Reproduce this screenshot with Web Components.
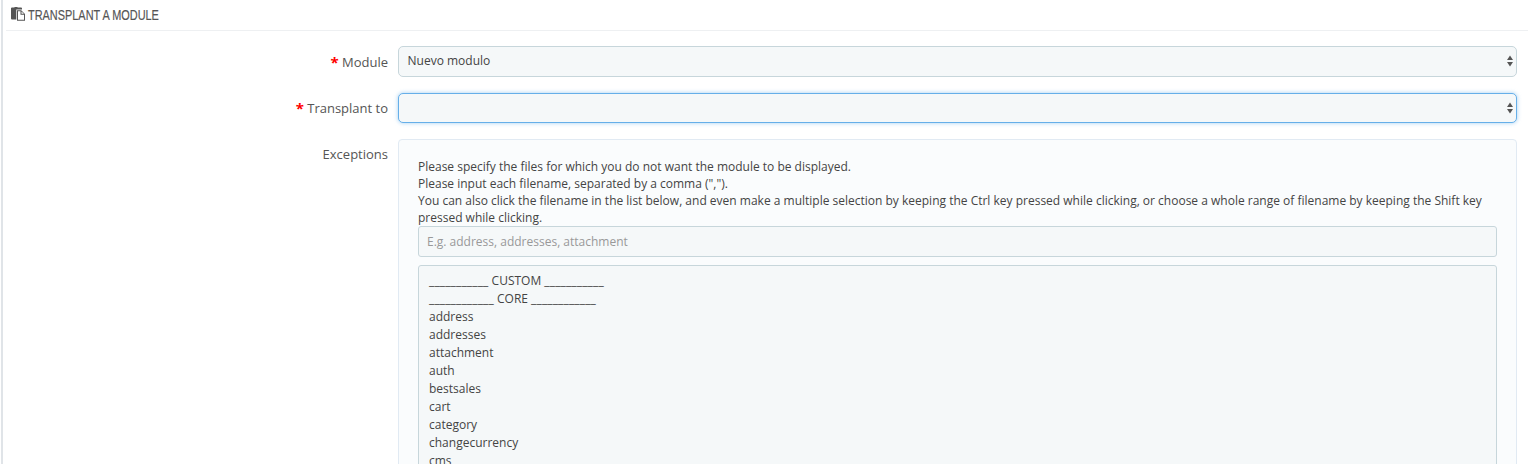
<!DOCTYPE html>
<html><head><meta charset="utf-8"><style>
html,body{margin:0;height:464px;overflow:hidden;background:#fff}
body{font:12px/17px "Open Sans",sans-serif;color:#555}
</style></head><body>
<tm-panel>
  <tm-row required label="Module"><tm-select value="Nuevo modulo"></tm-select></tm-row>
  <tm-row required label="Transplant to"><tm-select focused></tm-select></tm-row>
  <tm-row label="Exceptions" style="--label-top:6.5px">
    <tm-well>
      <p>Please specify the files for which you do not want the module to be displayed.<br>Please input each filename, separated by a comma (",").<br>You can also click the filename in the list below, and even make a multiple selection by keeping the Ctrl key pressed while clicking, or choose a whole range of filename by keeping the Shift key pressed while clicking.</p>
      <tm-input placeholder="E.g. address, addresses, attachment"></tm-input>
      <tm-list></tm-list>
    </tm-well>
  </tm-row>
</tm-panel>
<script>
function def(name, css, html){
  customElements.define(name, class extends HTMLElement{
    connectedCallback(){
      if(this.shadowRoot) return;
      const r=this.attachShadow({mode:'open'});
      r.innerHTML='<style>'+css+'</style>'+(typeof html==='function'?html(this):html);
    }
  });
}
def('tm-panel',`
 :host{display:block;box-sizing:border-box;height:464px;margin-left:1px;border-left:2px solid #e0e4e8;padding-left:3px;overflow:hidden}
 header{height:31px;box-sizing:border-box;border-bottom:1px solid #eef0f2;display:flex;align-items:center;gap:3px;padding:0 0 2px 5px;font:15px/17px "Liberation Sans",sans-serif;color:#555;text-transform:uppercase;-webkit-text-stroke:.2px #555}
 span{display:inline-block;transform:scaleX(.728);transform-origin:0 50%;white-space:nowrap}
 svg{width:14px;height:14px;flex:none;fill:#555}
 main{display:flex;flex-direction:column;gap:16px;padding-top:15px}
`,`<header><svg viewBox="0 0 14 14"><path d="M0 1.200Q0 .4 1 .4H3.500V0H6.500V.4H10Q11 .4 11 1.200V2.500H5.300V12.500H1Q0 12.500 0 11.500z"/><path fill-rule="evenodd" d="M6 3.200H10.200L14 7V13.800H6zM7 4.200V12.800H13V7.800H9.500V4.200zM10.500 4.400V6.800H12.900z"/></svg><span>Transplant a module</span></header><main><slot></slot></main>`);
def('tm-row',`
 :host{display:grid;grid-template-columns:382px 1119px;column-gap:10px}
 label{text-align:right;font-size:13px;line-height:17px;padding-top:var(--label-top,7.5px);color:#555}
 b{color:#f00;font-weight:700;font-size:15px;line-height:10px;vertical-align:-1px}
`,h=>`<label>${h.hasAttribute('required')?'<b>*</b> ':''}${h.getAttribute('label')}</label><div><slot></slot></div>`);
def('tm-select',`
 :host{display:flex;align-items:center;box-sizing:border-box;height:30.500px;padding:0 3.500px 2px 8.500px;border:1px solid #c7d6db;border-radius:5px;background:#f5f8f9;color:#444;font-size:12px}
 :host([focused]){border-color:#66afe9;box-shadow:0 0 4px rgba(102,175,233,.6)}
 span{flex:1;min-width:0}
 svg{width:6px;height:12px;fill:#555;flex:none;margin-top:2px}
`,h=>`<span>${h.getAttribute('value')||''}</span><svg viewBox="0 0 6 12"><path d="M3 .5 6 5H0zM0 7h6L3 11.500z"/></svg>`);
def('tm-well',`
 :host{display:block;box-sizing:border-box;height:400px;padding:18px 19px 0;border:1px solid #e1eaf3;border-radius:4px;background:#fafcfd;color:#444}
 ::slotted(p){margin:0;font-size:12px;line-height:17px}
`,`<slot></slot>`);
def('tm-input',`
 :host{display:flex;align-items:center;box-sizing:border-box;height:31px;margin-bottom:8px;padding:0 8px;border:1px solid #c7d6db;border-radius:3px;background:#f5f8f9;color:#999;font-size:12px}
`,h=>h.getAttribute('placeholder'));
def('tm-list',`
 :host{display:block;box-sizing:border-box;height:300px;padding:6px 10px;border:1px solid #c7d6db;border-radius:3px;background:#f5f8f9;color:#444;font-size:12px;line-height:18px;overflow:hidden}
 div{white-space:pre}
 i{font-style:normal;letter-spacing:.15px}
`,()=>{const u=n=>'<i>'+'_'.repeat(n)+'</i>';return [u(11)+' CUSTOM '+u(11),u(12)+' CORE '+u(12),'address','addresses','attachment','auth','bestsales','cart','category','changecurrency','cms'].map(t=>`<div>${t}</div>`).join('')});
</script>
</body></html>
